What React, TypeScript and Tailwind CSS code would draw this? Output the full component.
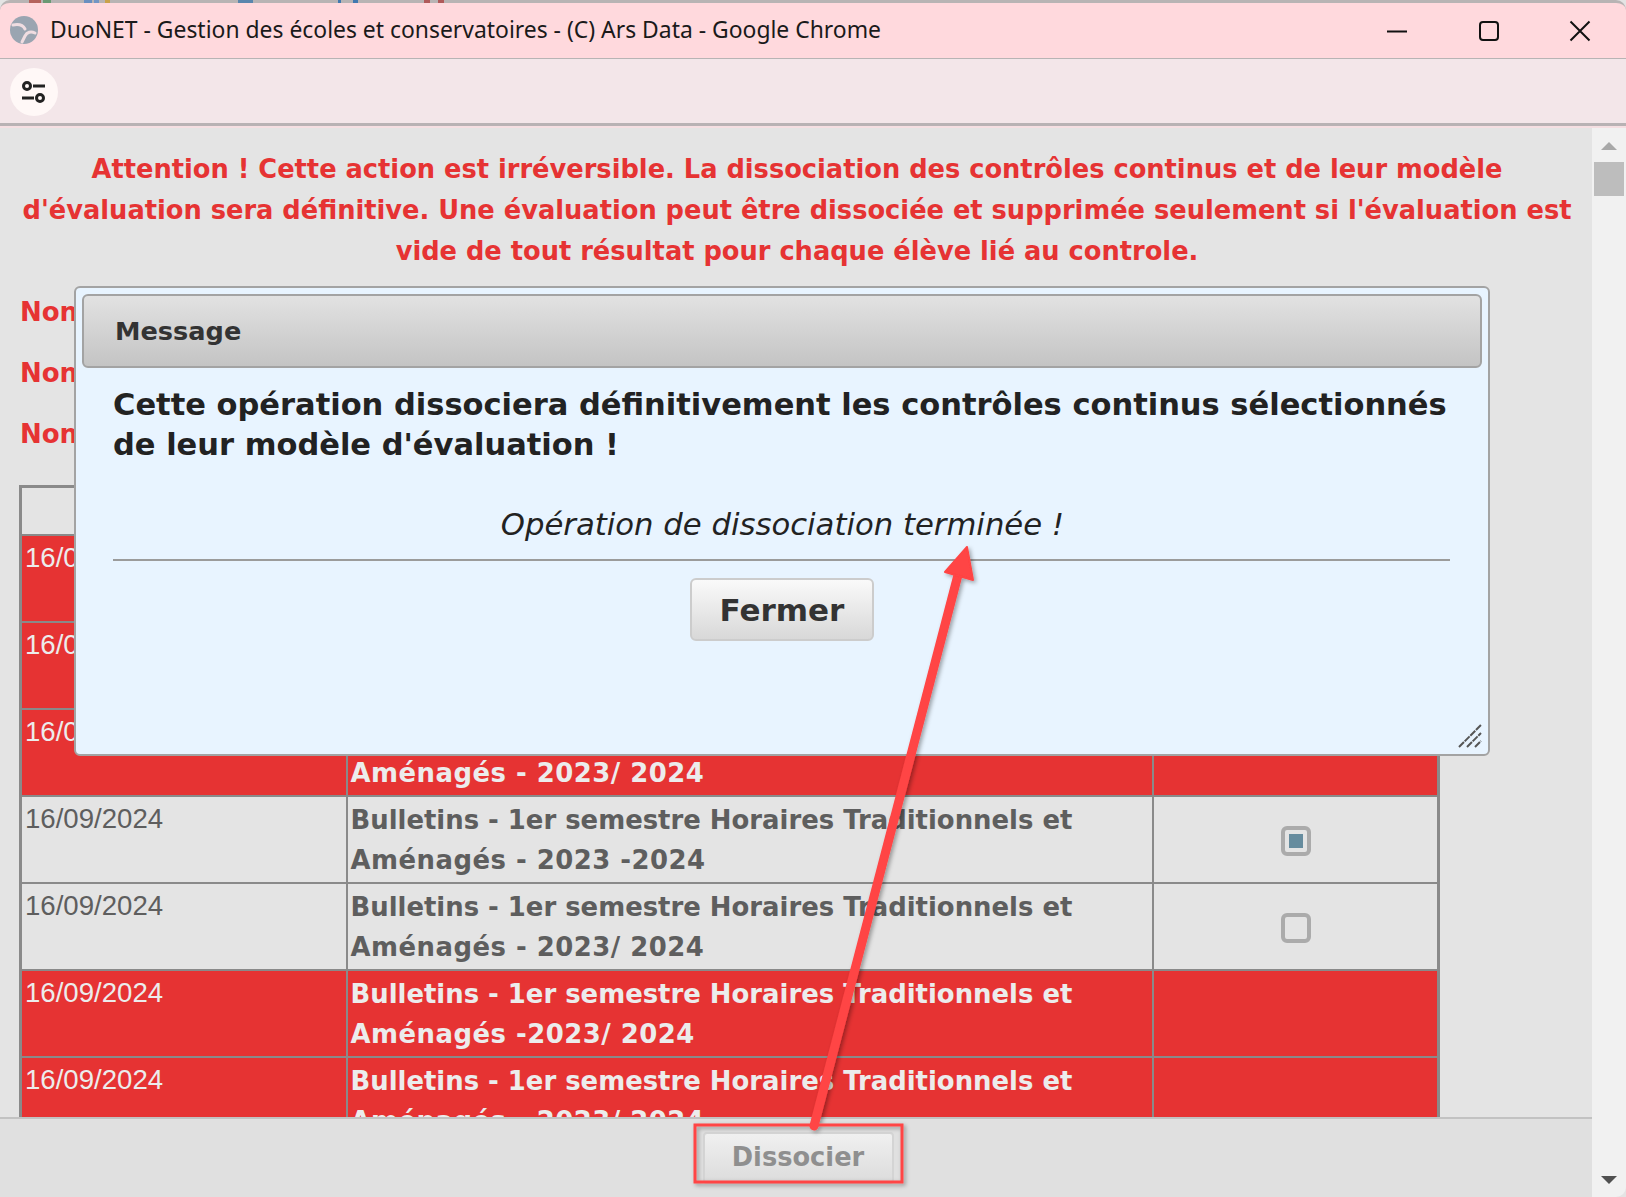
const rows = [
  { red: true, t: "Bulletins - 1er semestre Horaires Traditionnels et", s: "Aménagés - 2023/ 2024" },
  { red: true, t: "Bulletins - 1er semestre Horaires Traditionnels et", s: "Aménagés - 2023/ 2024" },
  { red: true, t: "Bulletins - 1er semestre Horaires Traditionnels et", s: "Aménagés - 2023/ 2024" },
  { red: false, checked: true, t: "Bulletins - 1er semestre Horaires Traditionnels et", s: "Aménagés - 2023 -2024" },
  { red: false, checked: false, t: "Bulletins - 1er semestre Horaires Traditionnels et", s: "Aménagés - 2023/ 2024" },
  { red: true, t: "Bulletins - 1er semestre Horaires Traditionnels et", s: "Aménagés -2023/ 2024" },
  { red: true, t: "Bulletins - 1er semestre Horaires Traditionnels et", s: "Aménagés - 2023/ 2024" },
];

const dv = "font-['DejaVu_Sans','Liberation_Sans',sans-serif]";

export default function App() {
  return (
    <div className={`relative w-[1626px] h-[1197px] overflow-hidden bg-[#e4e4e4] ${dv}`}>
      <div className="flex items-center h-[59px] bg-[#ffd9dd] border-b border-[#b8b4b4] border-t-[3px] border-t-[#b8b4b4] rounded-t-[10px] pl-[10px]">
        <svg width="29" height="29" viewBox="0 0 29 29" className="shrink-0">
          <circle cx="14" cy="14" r="14" fill="#9aa5b1" />
          <path d="M3 9C8 8 13 9 15 13" stroke="#f0dde1" strokeWidth="3" fill="none" strokeLinecap="round" />
          <path d="M25 17C21 15 17 16 15 20C14 22 13 24 12 26" stroke="#f0dde1" strokeWidth="3" fill="none" strokeLinecap="round" />
        </svg>
        <span className="ml-[11px] text-[22.900px] text-[#1a1a1a] font-['Noto_Sans',sans-serif] leading-none whitespace-nowrap">
          DuoNET - Gestion des écoles et conservatoires - (C) Ars Data - Google Chrome
        </span>
        <div className="ml-auto flex items-center">
          <svg width="24" height="24" viewBox="0 0 24 24" className="mr-[68px]"><path d="M2 12.500h20" stroke="#111" strokeWidth="2" /></svg>
          <svg width="24" height="24" viewBox="0 0 24 24" className="mr-[67px]"><rect x="3" y="3" width="18" height="18" rx="3" fill="none" stroke="#111" strokeWidth="2" /></svg>
          <svg width="24" height="24" viewBox="0 0 24 24" className="mr-[34px]"><path d="M2.500 2.500l19 19M21.500 2.500l-19 19" stroke="#111" strokeWidth="2" /></svg>
        </div>
      </div>

      <div className="flex items-center h-[67px] bg-[#f3e6e9] border-b-[3px] border-[#b8b2b4] pl-[10px] pt-[1px]">
        <div className="flex items-center justify-center h-[48px] w-[48px] rounded-full bg-[#fff8f7]">
          <svg width="30" height="30" viewBox="0 0 30 30">
            <circle cx="8" cy="9" r="3.500" fill="none" stroke="#222" strokeWidth="3" />
            <path d="M14 9h12M3 21h12" stroke="#222" strokeWidth="3" />
            <circle cx="21" cy="21" r="3.500" fill="none" stroke="#222" strokeWidth="3" />
          </svg>
        </div>
      </div>
      <div className="h-[2px] bg-[#f5dfe2]" />

      <div className="flex h-[1069px]">
        <div className="flex flex-col w-[1592px]">
          <div className="flex-1 min-h-0 overflow-hidden px-[21px] pt-[21px]">
            <p className="text-center font-bold text-[25.700px] leading-[41px] text-[#e63333] w-[1554px] -ml-[1px]">
              Attention ! Cette action est irréversible. La dissociation des contrôles continus et de leur modèle d'évaluation sera définitive. Une évaluation peut être dissociée et supprimée seulement si l'évaluation est vide de tout résultat pour chaque élève lié au controle.
            </p>
            <div className="flex flex-col gap-[31px] mt-[25px] font-bold text-[26px] leading-[30px] text-[#e63333] -ml-[1px]">
              <div>Non</div>
              <div>Non</div>
              <div>Non</div>
            </div>
            <table className="mt-[36px] -ml-[2px] w-[1418px] table-fixed border-collapse border-[3px] border-[#8a8a8a]">
              <colgroup>
                <col className="w-[326px]" />
                <col className="w-[806px]" />
                <col className="w-[286px]" />
              </colgroup>
              <thead>
                <tr className="h-[48px]">
                  <th className="border-2 border-[#8a8a8a]" />
                  <th className="border-2 border-[#8a8a8a]" />
                  <th className="border-2 border-[#8a8a8a]" />
                </tr>
              </thead>
              <tbody>
                {rows.map((r, i) => (
                  <tr key={i} className={`h-[87px] ${r.red ? "bg-[#e63333] text-[#ececec]" : "text-[#5e5e5e]"}`}>
                    <td className="align-top border-2 border-[#8a8a8a] px-[3px] pt-[6px] font-['Liberation_Sans',sans-serif] text-[27.600px] leading-[31px]">16/09/2024</td>
                    <td className="align-top border-2 border-[#8a8a8a] px-[3px] pt-[3px] font-bold text-[25.900px] leading-[40px] whitespace-nowrap overflow-hidden">
                      <div>{r.t}</div>
                      <div className="tracking-[0.5px]">{r.s}</div>
                    </td>
                    <td className="align-middle border-2 border-[#8a8a8a] text-center pt-[4px] pl-[2px]">
                      {!r.red && (
                        <div className="mx-auto flex items-center justify-center w-[30px] h-[30px] rounded-[6px] border-4 border-[#ababab]">
                          {r.checked && <div className="w-[14px] h-[14px] bg-[#668c9e]" />}
                        </div>
                      )}
                    </td>
                  </tr>
                ))}
              </tbody>
            </table>
          </div>
          <div className="flex items-center justify-center h-[80px] bg-[#e0e0e0] border-t-2 border-[#c2c2c2]">
            <button className="w-[191px] h-[52px] pb-[2px] rounded-[4px] bg-gradient-to-b from-[#f0f0f0] to-[#dcdcdc] border-2 border-[#d4d4d4] text-[25.700px] font-bold text-[#8f8f8f] ml-[4px]">
              Dissocier
            </button>
          </div>
        </div>
        <div className="relative w-[34px] bg-[#f1f1f1] rounded-br-[10px]">
          <div className="mx-auto mt-[14px] w-0 h-0 border-x-[8px] border-x-transparent border-b-[8px] border-b-[#a8a8a8]" />
          <div className="mx-auto mt-[12px] w-[30px] h-[34px] bg-[#bdbdbd]" />
          <div className="absolute bottom-[13px] left-[9px] w-0 h-0 border-x-[8px] border-x-transparent border-t-[8px] border-t-[#505050]" />
        </div>
      </div>

      {/* Strip of the window behind, over the top edge */}
      <div className="absolute left-0 top-0 w-[1000px] h-[3px]">
        <div className="absolute left-[29px] w-[12px] h-[3px] bg-[#b5635c]" />
        <div className="absolute left-[43px] w-[8px] h-[3px] bg-[#6a9a74]" />
        <div className="absolute left-[84px] w-[8px] h-[3px] bg-[#6a8fc0]" />
        <div className="absolute left-[94px] w-[5px] h-[3px] bg-[#7396c4]" />
        <div className="absolute left-[105px] w-[5px] h-[3px] bg-[#c9a24a]" />
        <div className="absolute left-[238px] w-[15px] h-[3px] bg-[#5a86ad]" />
        <div className="absolute left-[338px] w-[3px] h-[3px] bg-[#4179b0]" />
        <div className="absolute left-[353px] w-[5px] h-[3px] bg-[#4179b0]" />
        <div className="absolute left-[424px] w-[6px] h-[3px] bg-[#b05a5a]" />
        <div className="absolute left-[438px] w-[6px] h-[3px] bg-[#b05a5a]" />
      </div>

      {/* Dialog */}
      <div className="absolute left-[74px] top-[286px] flex flex-col w-[1416px] h-[470px] rounded-[6px] border-2 border-[#a3a3a3] bg-[#e8f4ff] p-[6px]">
        <div className="flex items-center h-[74px] shrink-0 pl-[31px] pt-[1px] rounded-[6px] border-2 border-[#a3a3a3] bg-gradient-to-b from-[#e2e2e2] to-[#c4c4c4] text-[25.600px] font-bold text-[#333333]">
          Message
        </div>
        <div className="pl-[31px] pr-[32px]">
          <p className="mt-[17px] text-[30.500px] leading-[40px] font-bold text-[#222222]">
            Cette opération dissociera définitivement les contrôles continus sélectionnés de leur modèle d'évaluation !
          </p>
          <p className="mt-[40px] text-center italic text-[30.700px] leading-[40px] text-[#222222] pl-[2px]">
            Opération de dissociation terminée !
          </p>
          <div className="mt-[14px] h-[2px] bg-[#9b9b9b]" />
          <div className="flex justify-center mt-[17px]">
            <button className="w-[184px] h-[63px] pt-[1px] pl-[1px] rounded-[6px] border-2 border-[#cccccc] bg-gradient-to-b from-[#fafafa] to-[#d8d8d8] text-[31px] font-bold text-[#333333]">
              Fermer
            </button>
          </div>
        </div>
        <svg width="24" height="24" viewBox="0 0 24 24" className="absolute right-[6px] bottom-[6px]">
          <path d="M1 23L23 1M9 23L23 9M17 23l6-6" stroke="#555" strokeWidth="2" strokeDasharray="7 1" />
        </svg>
      </div>

      {/* Annotations */}
      <svg width="1626" height="1197" viewBox="0 0 1626 1197" className="absolute left-0 top-0 pointer-events-none">
        <defs>
          <filter id="shadow" x="-20%" y="-20%" width="140%" height="140%">
            <feDropShadow dx="2" dy="2" stdDeviation="2" floodColor="#000" floodOpacity="0.35" />
          </filter>
        </defs>
        <g filter="url(#shadow)">
          <path d="M814 1126L958 575" stroke="#ff4444" strokeWidth="9" strokeLinecap="round" fill="none" />
          <path d="M967 547L945 572L973 580Z" fill="#ff4444" stroke="#ff4444" strokeWidth="2" strokeLinejoin="round" />
          <rect x="695" y="1125" width="207" height="57" fill="none" stroke="#ff4444" strokeWidth="3" />
        </g>
      </svg>
    </div>
  );
}
